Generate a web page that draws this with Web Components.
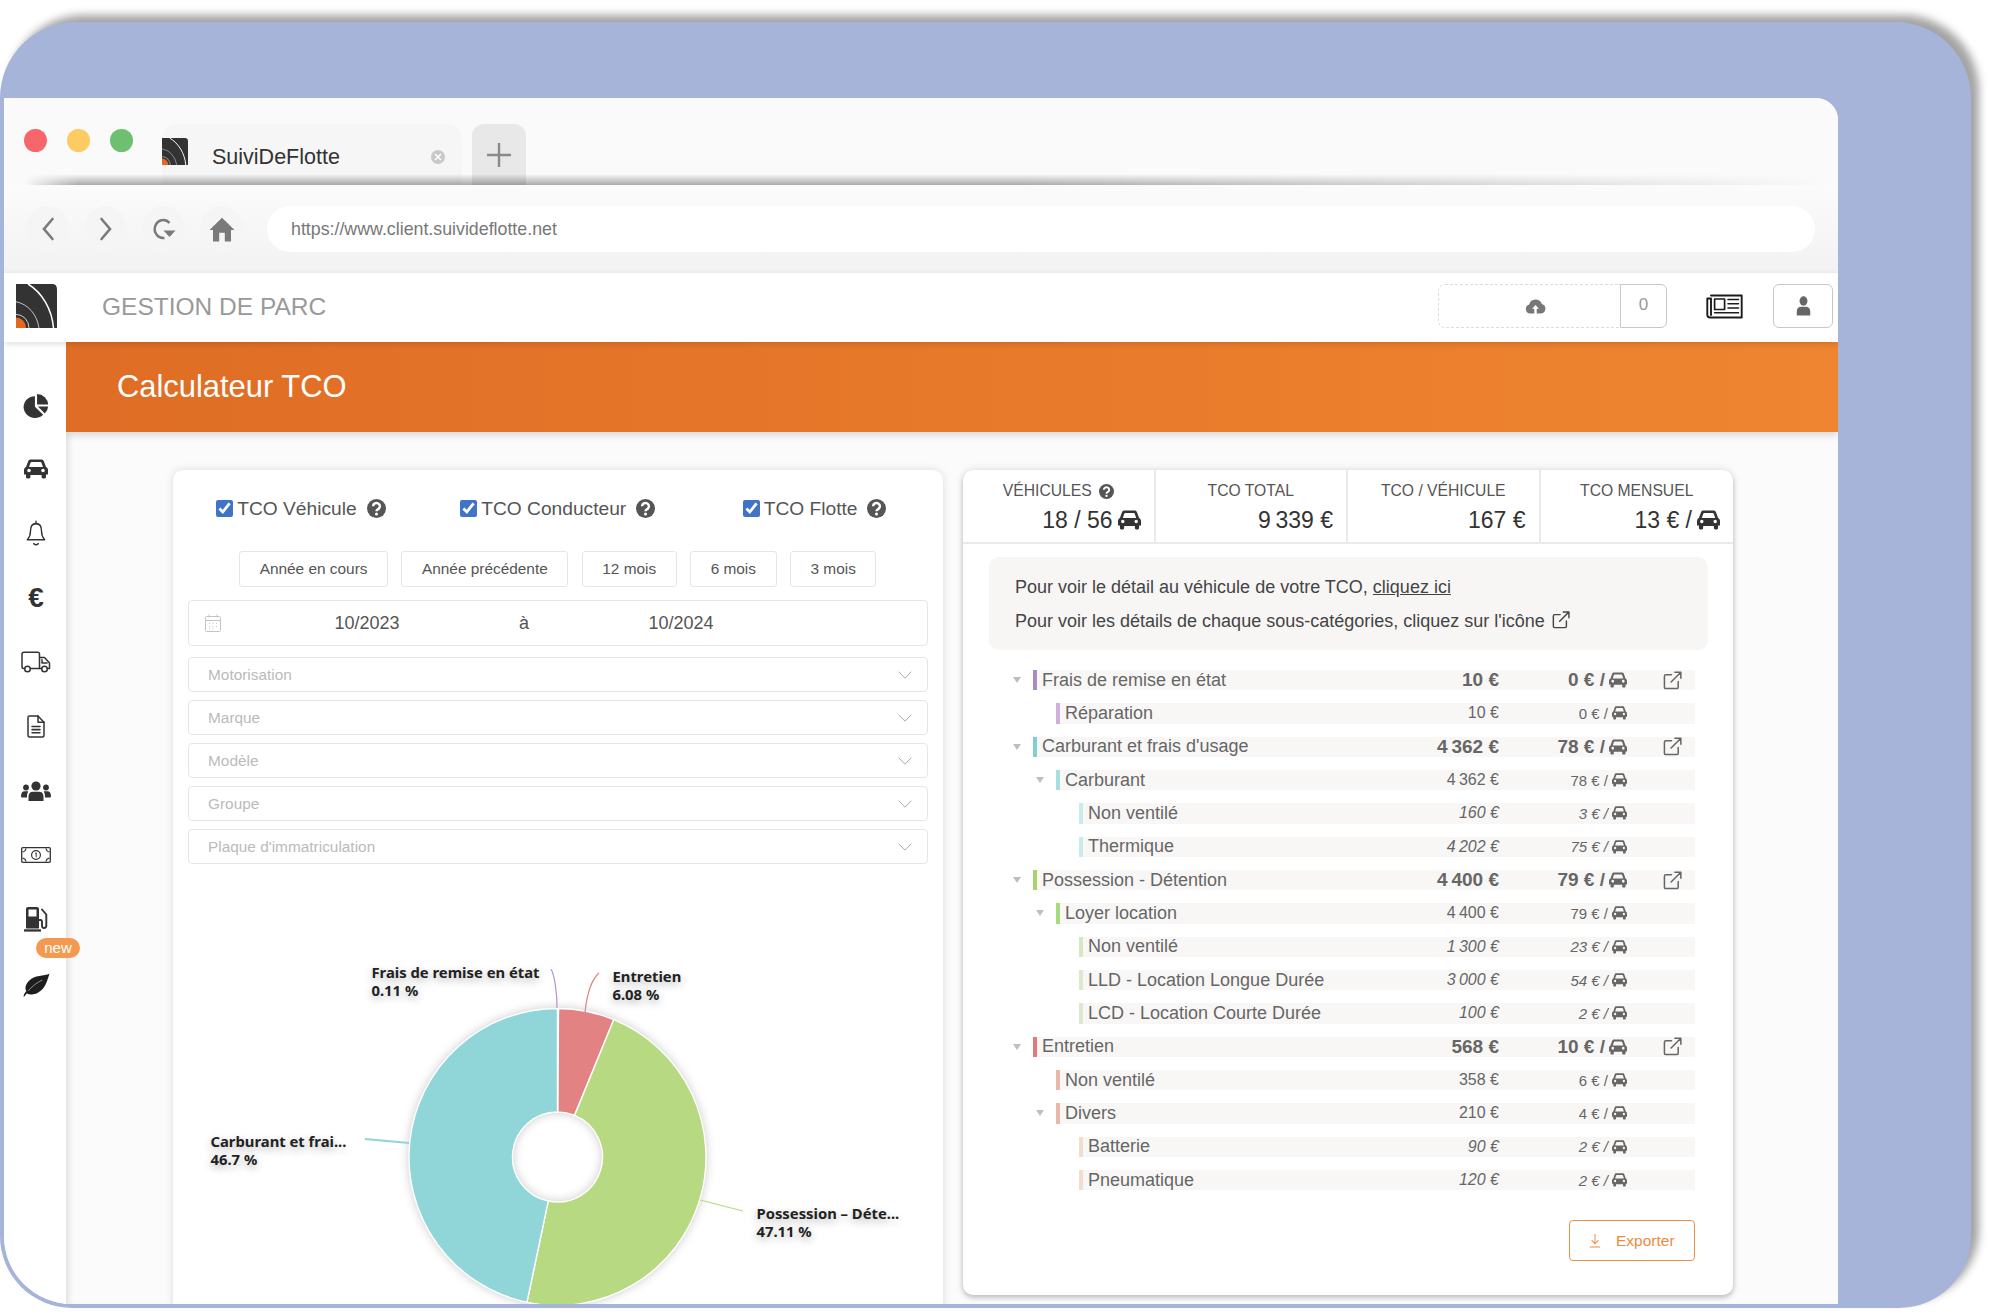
<!DOCTYPE html>
<html lang="fr">
<head>
<meta charset="utf-8">
<title>Calculateur TCO</title>
<style>
  html, body { margin: 0; height: 1314px; overflow: hidden; background: #fff; }
  body { font-family: "Liberation Sans", Arial, sans-serif; color: #555; }
</style>
</head>
<body>
<browser-frame>
  <browser-chrome url="https://www.client.suivideflotte.net" tab="SuiviDeFlotte"></browser-chrome>
  <app-header title="GESTION DE PARC"></app-header>
  <app-body>
    <side-nav slot="nav"></side-nav>
    <page-banner title="Calculateur TCO"></page-banner>
    <card-grid>
      <tco-filters></tco-filters>
      <tco-summary>
        <tco-row level="1" color="#a98bbf" label="Frais de remise en état" total="10 €" per="0 €" caret ext></tco-row>
        <tco-row level="2" color="#cfb0dc" label="Réparation" total="10 €" per="0 €"></tco-row>
        <tco-row level="1" color="#7fd0d4" label="Carburant et frais d'usage" total="4 362 €" per="78 €" caret ext></tco-row>
        <tco-row level="2" color="#a5dfe0" label="Carburant" total="4 362 €" per="78 €" caret></tco-row>
        <tco-row level="3" color="#c8ecec" label="Non ventilé" total="160 €" per="3 €"></tco-row>
        <tco-row level="3" color="#c8ecec" label="Thermique" total="4 202 €" per="75 €"></tco-row>
        <tco-row level="1" color="#a5d46f" label="Possession - Détention" total="4 400 €" per="79 €" caret ext></tco-row>
        <tco-row level="2" color="#a9d97f" label="Loyer location" total="4 400 €" per="79 €" caret></tco-row>
        <tco-row level="3" color="#d3e9bf" label="Non ventilé" total="1 300 €" per="23 €"></tco-row>
        <tco-row level="3" color="#dde9cd" label="LLD - Location Longue Durée" total="3 000 €" per="54 €"></tco-row>
        <tco-row level="3" color="#dde9cd" label="LCD - Location Courte Durée" total="100 €" per="2 €"></tco-row>
        <tco-row level="1" color="#e07a78" label="Entretien" total="568 €" per="10 €" caret ext></tco-row>
        <tco-row level="2" color="#e8b9a8" label="Non ventilé" total="358 €" per="6 €"></tco-row>
        <tco-row level="2" color="#e8b9a8" label="Divers" total="210 €" per="4 €" caret></tco-row>
        <tco-row level="3" color="#f3dccf" label="Batterie" total="90 €" per="2 €"></tco-row>
        <tco-row level="3" color="#f3dccf" label="Pneumatique" total="120 €" per="2 €"></tco-row>
      </tco-summary>
    </card-grid>
  </app-body>
</browser-frame>

<script>
// svg bodies for every icon: [viewBox, markup]
const stroke = (w) => `fill="none" stroke="currentColor" stroke-width="${w}" stroke-linecap="round" stroke-linejoin="round"`;
const ICONS = {
  car: ['0 0 24 20', `<path fill="currentColor" fill-rule="evenodd" d="M2 8 4.2 2.2C4.6 1 5.6.5 6.8.5H17.2C18.4.5 19.4 1 19.8 2.2L22 8C23.2 8.6 24 9.6 24 11V15.5H22V18C22 18.8 21.4 19.4 20.6 19.4H19C18.2 19.4 17.6 18.8 17.6 18V16H6.4V18C6.4 18.8 5.8 19.4 5 19.4H3.4C2.6 19.4 2 18.8 2 18V15.5H0V11C0 9.6.8 8.6 2 8ZM5 8H19L17.6 4C17.4 3.4 17 3 16.4 3H7.6C7 3 6.6 3.4 6.4 4ZM5 9.7A1.8 1.8 0 1 0 5 13.3 1.8 1.8 0 1 0 5 9.7ZM19 9.7A1.8 1.8 0 1 0 19 13.3 1.8 1.8 0 1 0 19 9.7Z"/>`],
  pie: ['0 0 24 24', `<g fill="currentColor"><path d="M11 3A10.5 10.5 0 1 0 18.6 20.8L11 13.2Z"/><path d="M13 1A10.5 10.5 0 0 1 23.2 11H13Z"/><path d="M13.8 13H23.2A10.5 10.5 0 0 1 20.2 19.6Z"/></g>`],
  bell: ['0 0 24 26', `<g ${stroke(1.5)}><path d="M12 3.5C7.5 3.5 6 7 6 10.5 6 15 4.5 17 2.5 19H21.5C19.5 17 18 15 18 10.5 18 7 16.5 3.5 12 3.5Z"/><path d="M12 1.2V3.5M9.5 22.8Q12 24.8 14.5 22.8"/></g>`],
  truck: ['0 0 30 22', `<g ${stroke(1.5)}><path d="M3.5 17.5H2.5Q1 17.5 1 16V3Q1 1.2 3 1.2H17Q18.5 1.2 18.5 3V17.5H9.5"/><path d="M18.5 6.5H23.5L28.5 12V17.5H26.5M18.5 17.5H20.5M21 8.8V12H26"/><circle cx="6.5" cy="18" r="2.8"/><circle cx="23.5" cy="18" r="2.8"/></g>`],
  doc: ['0 0 18 22', `<g ${stroke(1.5)}><path d="M2.4 1H11L17 7V19.6Q17 21 15.6 21H2.4Q1 21 1 19.6V2.4Q1 1 2.4 1Z"/><path d="M11 1V7H17M5 11H13M5 14H13M5 17H13"/></g>`],
  users: ['0 0 30 20', `<g fill="currentColor"><circle cx="15" cy="5" r="4.6"/><path d="M7.5 20V16Q7.5 10.8 12 10.8H18Q22.5 10.8 22.5 16V20Z"/><circle cx="5" cy="6.5" r="2.9"/><path d="M0 15.5Q0 10.3 3.6 10.3H7.3Q5.8 12.5 6 16.6H1.2Q0 16.6 0 15.5Z"/><circle cx="25" cy="6.5" r="2.9"/><path d="M30 15.5Q30 10.3 26.4 10.3H22.7Q24.2 12.5 24 16.6H28.8Q30 16.6 30 15.5Z"/></g>`],
  money: ['0 0 30 16', `<g fill="none" stroke="currentColor"><rect x=".7" y=".7" width="28.6" height="14.6" rx="1" stroke-width="1.3"/><circle cx="15" cy="8" r="4.4" stroke-width="1.2"/><path d="M14.2 6.4 15.2 5.8V10.2" stroke-width="1"/><path d="M1.5 5Q4.5 4.5 5 1.5M28.5 5Q25.5 4.5 25 1.5M1.5 11Q4.5 11.5 5 14.5M28.5 11Q25.5 11.5 25 14.5" stroke-width="1.2"/></g>`],
  fuel: ['0 0 24 26', `<path fill="currentColor" fill-rule="evenodd" d="M2 22.5V3Q2 1 4 1H13Q15 1 15 3V22.5ZM4.5 3.5V10.5H12.5V3.5Z"/><path fill="currentColor" d="M0 23.3H17V25.6H0Z"/><path ${stroke(1.9)} d="M15 14H16.5Q18 14 18 15.8V19.5Q18 22 20 22 22.3 22 22.3 19.5V8.5L18 3.5"/>`],
  leaf: ['0 0 28 24', `<path fill="currentColor" d="M27.5.8C22 3 12 2 6 8 2 12 2 16 3.5 18 1.5 20 1 21.8.4 23.6 1.6 23.6 2.5 22 3.7 20.4 6 21 10 22.5 15 20 24 15.5 25 7 27.5.8Z"/><path fill="none" stroke="#fff" stroke-width=".5" d="M5.5 17.8C9 13.5 14 10 20 7"/>`],
  news: ['0 0 37 25', `<g ${stroke(1.9)}><path d="M5 1.5H35.7V23.5H4Q1.3 23.5 1.3 20.8V4.5H5V21"/><rect x="8.6" y="5" width="10" height="10.5" stroke-width="1.7"/><path d="M22 5.5H32.5M22 9.7H32.5M22 14H32.5M8.6 18.8H32.5" stroke-width="1.6"/></g>`],
  cloud: ['0 0 24 18', `<path fill="currentColor" d="M6 17.5A5.2 5.2 0 0 1 4.8 7.3 7.5 7.5 0 0 1 19.2 6.7 5.5 5.5 0 0 1 18.3 17.5H13.4V12.2H16L12 7.8 8 12.2H10.6V17.5Z"/>`],
  user: ['0 0 24 26', `<g fill="currentColor"><ellipse cx="12" cy="6.5" rx="5.6" ry="6.2"/><path d="M2.5 25.5V20.5Q2.5 14 9 14H15Q21.5 14 21.5 20.5V25.5Z"/></g>`],
  help: ['0 0 20 20', `<circle cx="10" cy="10" r="10" fill="currentColor"/><path fill="none" stroke="#fff" stroke-width="2.6" d="M6.4 7.6A3.6 3.4 0 1 1 11.8 10.6C10.5 11.3 10 11.9 10 13"/><circle cx="10" cy="15.8" r="1.6" fill="#fff"/>`],
  ext: ['0 0 20 20', `<g ${stroke(1.6)}><path d="M9 4H3Q1.5 4 1.5 5.5V17Q1.5 18.5 3 18.5H14.5Q16 18.5 16 17V11"/><path d="M8.5 11.5 18.5 1.5M12.5 1.2H18.8V7.5"/></g>`],
  calendar: ['0 0 16 18', `<g fill="none" stroke="currentColor" stroke-width="1"><rect x=".5" y="2.5" width="15" height="15" rx="1"/><path d="M.5 6.5H15.5M4 .5V3.5M12 .5V3.5M4 9.5H5M7.5 9.5H8.5M11 9.5H12M4 12.5H5M7.5 12.5H8.5M11 12.5H12M4 15H5M7.5 15H8.5"/></g>`],
  chevron: ['0 0 14 8', `<path fill="none" stroke="currentColor" stroke-width="1" d="M.7.7 7 7.2 13.3.7"/>`],
  download: ['0 0 14 16', `<path fill="none" stroke="currentColor" stroke-width="1.1" d="M7 1V11M3 7.5 7 11.5 11 7.5M1 15H13"/>`],
  back: ['0 0 14 24', `<path fill="none" stroke="currentColor" stroke-width="2.6" stroke-linecap="round" d="M11.5 2 3 12 11.5 22"/>`],
  forward: ['0 0 14 24', `<path fill="none" stroke="currentColor" stroke-width="2.6" stroke-linecap="round" d="M2.5 2 11 12 2.5 22"/>`],
  reload: ['0 0 24 24', `<path fill="none" stroke="currentColor" stroke-width="2.5" d="M17.5 6A8.5 9 0 1 0 12.5 21"/><path fill="currentColor" d="M11.5 13.5H23.5L17.5 20Z"/>`],
  home: ['0 0 26 26', `<path fill="currentColor" d="M13 .8 25.5 13.5H22V25.5H15.8V16.5H10.2V25.5H4V13.5H.5Z"/>`],
  plus: ['0 0 24 24', `<path fill="none" stroke="currentColor" stroke-width="2.4" d="M12 0V24M0 12H24"/>`],
  logo: ['0 0 41 42', `<path fill="#333" d="M0 0H36Q41 0 41 5V42H0Z"/><path fill="none" stroke="#fff" stroke-width="1.5" d="M12 0C26 8 36 24 37.5 42"/><path fill="none" stroke="#ccc" stroke-width=".9" d="M0 17C12 19 21 29 23 42"/><path fill="none" stroke="#eee" stroke-width=".8" d="M0 29A13 13 0 0 1 13 42"/><path fill="#e2691f" d="M0 32A10 10 0 0 1 10 42H0Z"/>`],
};

class UiIcon extends HTMLElement {
  connectedCallback() {
    const [box, body] = ICONS[this.getAttribute('name')];
    const w = this.getAttribute('w') || 16;
    const h = this.getAttribute('h') || w;
    this.attachShadow({ mode: 'open' }).innerHTML = `
      <style>:host { display: inline-flex; flex: none; line-height: 0; } svg { display: block; }</style>
      <svg width="${w}" height="${h}" viewBox="${box}" preserveAspectRatio="none">${body}</svg>`;
  }
}
customElements.define('ui-icon', UiIcon);

class BrowserFrame extends HTMLElement {
  connectedCallback() {
    this.attachShadow({ mode: 'open' }).innerHTML = `
      <style>
        :host {
          display: block; box-sizing: border-box; width: 1971px; height: 1286px; margin-top: 22px;
          padding: 76px 133px 4px 4px; background: #a5b4d8; border-radius: 76px 76px 72px 72px;
          box-shadow: 8px -7px 9px rgba(0,0,0,.36);
        }
        .window {
          display: flex; flex-direction: column; height: 100%; overflow: hidden; background: #fff;
          border-radius: 0 22px 0 68px;
        }
      </style>
      <div class="window"><slot></slot></div>`;
  }
}
customElements.define('browser-frame', BrowserFrame);

class BrowserChrome extends HTMLElement {
  connectedCallback() {
    this.attachShadow({ mode: 'open' }).innerHTML = `
      <style>
        :host { display: block; flex: none; }
        .tabs { position: relative; display: flex; height: 87px; box-sizing: border-box; padding: 26px 0 0 20px; background: #fafafa; }
        .tabs::after {
          content: ""; position: absolute; left: 20px; right: 10px; bottom: 0; height: 11px;
          background: linear-gradient(transparent, rgba(0,0,0,.32));
          -webkit-mask-image: linear-gradient(90deg, transparent, #000 3%, #000 55%, transparent);
        }
        .dots { display: flex; gap: 20.5px; padding-top: 5px; width: 138px; }
        .dots i { width: 22.5px; height: 23px; border-radius: 50%; }
        .tab {
          display: flex; align-items: flex-start; box-sizing: border-box; width: 300px; padding-top: 14px;
          background: #f7f6f6; border-radius: 14px 14px 0 0;
        }
        .tab span { margin-left: 24px; width: 219px; font-size: 21.5px; line-height: 38px; color: #333; }
        .close {
          width: 14px; height: 14px; margin-top: 12px; border-radius: 50%; background: #c9c9c9; color: #fff;
          display: grid; place-items: center;
        }
        .new {
          width: 54px; margin-left: 10px; background: #e8e8e8; border-radius: 12px 12px 0 0; color: #8a8a8a;
          display: flex; justify-content: center; padding-top: 19px; box-sizing: border-box;
        }
        .bar {
          display: flex; align-items: center; height: 88px; box-sizing: border-box; padding: 0 23px 0 22px;
          background: linear-gradient(#fbfbfb, #f3f2f2);
        }
        .nav { display: flex; gap: 15px; margin-right: 24px; }
        .nav b {
          width: 43px; height: 46px; border-radius: 50%; background: #f6f5f5; color: #7a7a7a;
          display: grid; place-items: center;
        }
        .url {
          flex: 1; height: 46px; padding-left: 24px; border-radius: 23px; background: #fff;
          font-size: 17.8px; line-height: 46px; color: #777;
        }
      </style>
      <div class="tabs">
        <div class="dots"><i style="background:#f6666a"></i><i style="background:#fecb62"></i><i style="background:#6cc070"></i></div>
        <div class="tab">
          <ui-icon name="logo" w="26" h="27"></ui-icon>
          <span>${this.getAttribute('tab')}</span>
          <div class="close"><svg width="8" height="8" viewBox="0 0 8 8"><path d="M1 1 7 7M7 1 1 7" stroke="#fff" stroke-width="1.6"/></svg></div>
        </div>
        <div class="new"><ui-icon name="plus" w="24" h="24"></ui-icon></div>
      </div>
      <div class="bar">
        <div class="nav">
          <b><ui-icon name="back" w="14" h="24"></ui-icon></b>
          <b><ui-icon name="forward" w="14" h="24"></ui-icon></b>
          <b><ui-icon name="reload" w="24" h="24"></ui-icon></b>
          <b><ui-icon name="home" w="26" h="25"></ui-icon></b>
        </div>
        <div class="url">${this.getAttribute('url')}</div>
      </div>`;
  }
}
customElements.define('browser-chrome', BrowserChrome);

class AppHeader extends HTMLElement {
  connectedCallback() {
    this.attachShadow({ mode: 'open' }).innerHTML = `
      <style>
        :host {
          position: relative; z-index: 3; display: flex; flex: none; align-items: center; box-sizing: border-box;
          height: 69px; padding: 0 5px 3px 12px; background: #fff; box-shadow: 0 2px 6px rgba(0,0,0,.14);
        }
        h1 { flex: 1; margin: 2px 0 0 45px; font-size: 24.5px; font-weight: 400; color: #999; }
        .upload {
          display: flex; width: 229px; height: 44px; box-sizing: border-box;
        }
        .drop {
          flex: 1; display: flex; align-items: center; justify-content: center; padding-left: 12px;
          border: 1.5px dashed #ddd; border-right: 0; border-radius: 7px 0 0 7px; color: #777;
        }
        .count {
          width: 47px; box-sizing: border-box; border: 1.5px solid #c8c8c8; border-radius: 0 6px 6px 0;
          text-align: center; font-size: 17px; line-height: 40px; color: #999;
        }
        .news { margin: 0 30px 0 39px; color: #1c1c1c; }
        .me {
          width: 60px; height: 44px; box-sizing: border-box; border: 1.5px solid #c8c8c8; border-radius: 6px;
          display: grid; place-items: center; color: #666;
        }
      </style>
      <ui-icon name="logo" w="41" h="44"></ui-icon>
      <h1>${this.getAttribute('title')}</h1>
      <div class="upload">
        <div class="drop"><ui-icon name="cloud" w="21" h="16"></ui-icon></div>
        <div class="count">0</div>
      </div>
      <ui-icon class="news" name="news" w="37" h="25"></ui-icon>
      <div class="me"><ui-icon name="user" w="17" h="20"></ui-icon></div>`;
  }
}
customElements.define('app-header', AppHeader);

class AppBody extends HTMLElement {
  connectedCallback() {
    this.attachShadow({ mode: 'open' }).innerHTML = `
      <style>
        :host { display: flex; flex: 1; min-height: 0; }
        nav { position: relative; z-index: 2; flex: none; width: 62px; background: #fff; }
        main { flex: 1; min-width: 0; display: flex; flex-direction: column; background: #fbfbfb;
               box-shadow: inset 7px 0 7px -5px rgba(0,0,0,.13); }
      </style>
      <nav><slot name="nav"></slot></nav>
      <main><slot></slot></main>`;
  }
}
customElements.define('app-body', AppBody);

class SideNav extends HTMLElement {
  connectedCallback() {
    const items = [
      ['pie', 26, 25], ['car', 24, 20], ['bell', 22, 27], ['euro'], ['truck', 30, 22], ['doc', 18, 23],
      ['users', 30, 20], ['money', 30, 16], ['fuel', 24, 26],
    ];
    const cells = items.map(([name, w, h]) => `<div class="item">${
      name === 'euro' ? '<span class="euro">€</span>' : `<ui-icon name="${name}" w="${w}" h="${h}"></ui-icon>`
    }</div>`).join('');
    this.attachShadow({ mode: 'open' }).innerHTML = `
      <style>
        :host { display: block; padding: 31px 0 0 2px; color: #333; }
        .item { height: 64.25px; display: grid; place-items: center; }
        .euro { font-size: 28px; font-weight: 700; line-height: 1; }
        .leaf { height: 64px; margin-top: 2px; display: grid; place-items: center; color: #1e1e1e; }
        .badge {
          position: absolute; left: 32px; top: 596px; width: 44px; height: 20px; border-radius: 10px;
          background: #f39a50; color: #fff; font-size: 15px; line-height: 19px; text-align: center;
        }
      </style>
      ${cells}
      <div class="badge">new</div>
      <div class="leaf"><ui-icon name="leaf" w="27" h="24"></ui-icon></div>`;
  }
}
customElements.define('side-nav', SideNav);

class PageBanner extends HTMLElement {
  connectedCallback() {
    this.attachShadow({ mode: 'open' }).innerHTML = `
      <style>
        :host {
          position: relative; display: flex; flex: none; align-items: center; box-sizing: border-box; height: 90px; padding: 0 0 0 51px;
          background: linear-gradient(90deg, #df6d25, #ef8530); box-shadow: 0 3px 8px rgba(0,0,0,.15);
          color: #fff; font-size: 30.9px;
        }
      </style>
      ${this.getAttribute('title')}`;
  }
}
customElements.define('page-banner', PageBanner);

class CardGrid extends HTMLElement {
  connectedCallback() {
    this.attachShadow({ mode: 'open' }).innerHTML = `
      <style>
        :host { display: grid; grid-template-columns: 770.5px 770px; gap: 20px; align-items: start; padding: 38px 0 0 106.5px; }
      </style>
      <slot></slot>`;
  }
}
customElements.define('card-grid', CardGrid);

class TcoFilters extends HTMLElement {
  connectedCallback() {
    const check = (label) => `
      <label><input type="checkbox" checked><span>${label}</span><ui-icon name="help" w="19" h="19"></ui-icon></label>`;
    const select = (label) => `<div class="select"><span>${label}</span><ui-icon name="chevron" w="14" h="8"></ui-icon></div>`;
    this.attachShadow({ mode: 'open' }).innerHTML = `
      <style>
        :host {
          display: block; box-sizing: border-box; height: 900px; background: #fff; border-radius: 10px;
          box-shadow: 0 0 8px rgba(0,0,0,.13); padding: 0 15.5px;
        }
        .checks { display: grid; grid-template-columns: repeat(3, 1fr); height: 81px; align-items: center; margin: 0 -15.5px; padding-bottom: 4px; box-sizing: border-box; }
        label { display: flex; align-items: center; justify-content: center; font-size: 19.2px; color: #555; }
        input { width: 17px; height: 17px; margin: 0 4px 0 0; accent-color: #3f74c9; }
        label ui-icon { margin-left: 10px; color: #555; }
        .ranges { display: flex; justify-content: center; gap: 13.5px; }
        .ranges button {
          height: 36px; padding: 0 19.5px; background: #fff; border: 1.5px solid #e6e6ea; border-radius: 3px;
          font: 15.4px "Liberation Sans", Arial, sans-serif; color: #555;
        }
        .date {
          display: flex; align-items: center; height: 46px; margin-top: 13px; box-sizing: border-box; padding-left: 16px;
          border: 1.5px solid #e6e6ea; border-radius: 4px; font-size: 18px; color: #555;
        }
        .date ui-icon { color: #c4c4c4; }
        .date span { width: 292px; text-align: center; }
        .date em { width: 22px; font-style: normal; text-align: center; }
        .select {
          display: flex; align-items: center; justify-content: space-between; height: 35px; margin-top: 8px; box-sizing: border-box;
          padding: 0 15px 0 19px; border: 1.5px solid #e6e6ea; border-radius: 4px; font-size: 15.4px; color: #bbb;
        }
        .select ui-icon { color: #aaa; }
        .first { margin-top: 11px; }
      </style>
      <div class="checks">${check('TCO Véhicule')}${check('TCO Conducteur')}${check('TCO Flotte')}</div>
      <div class="ranges">
        <button>Année en cours</button><button>Année précédente</button><button>12 mois</button><button>6 mois</button><button>3 mois</button>
      </div>
      <div class="date"><ui-icon name="calendar" w="16" h="18"></ui-icon><span>10/2023</span><em>à</em><span>10/2024</span></div>
      <div class="select first"><span>Motorisation</span><ui-icon name="chevron" w="14" h="8"></ui-icon></div>
      ${select('Marque')}${select('Modèle')}${select('Groupe')}${select("Plaque d'immatriculation")}
      <tco-donut></tco-donut>`;
  }
}
customElements.define('tco-filters', TcoFilters);

class TcoDonut extends HTMLElement {
  connectedCallback() {
    // share of the total, clockwise from the top
    const slices = [[0.11, '#b892cc'], [6.08, '#e28282'], [47.11, '#b6d982'], [46.7, '#90d5d8']];
    const cx = 369.5, cy = 293, R = 148.5, r = 45;
    const pt = (rad, a) => `${(cx + rad * Math.sin(a)).toFixed(2)} ${(cy - rad * Math.cos(a)).toFixed(2)}`;
    let acc = 0;
    const paths = slices.map(([pct, color]) => {
      const a0 = acc / 100 * 2 * Math.PI;
      acc += pct;
      const a1 = acc / 100 * 2 * Math.PI;
      const big = pct > 50 ? 1 : 0;
      return `<path fill="${color}" stroke="#fff" stroke-width="1.4" d="M${pt(R, a0)}A${R} ${R} 0 ${big} 1 ${pt(R, a1)}L${pt(r, a1)}A${r} ${r} 0 ${big} 0 ${pt(r, a0)}Z"/>`;
    }).join('');
    this.attachShadow({ mode: 'open' }).innerHTML = `
      <style>
        :host { position: relative; display: block; height: 440px; margin: 0 -15.5px; }
        svg { position: absolute; left: 15.5px; top: 0; }
        .pie { filter: drop-shadow(0 0 5px rgba(0,0,0,.2)); }
        .label {
          position: absolute; white-space: nowrap; font: 700 14.8px/18px "Noto Sans", "DejaVu Sans", sans-serif; color: #222;
          text-shadow: 0 3px 9px rgba(0,0,0,.3);
        }
      </style>
      <svg width="740" height="440">
        <g class="pie">${paths}</g>
        <g fill="none" stroke-width="1.2">
          <path stroke="#b892cc" d="M363 105C367 112 369 130 369 144"/>
          <path stroke="#e28282" d="M411 109C403 116 399 130 397 148"/>
          <path stroke="#90d5d8" stroke-width="1.8" d="M177 275 221 279"/>
          <path stroke="#b6d982" d="M512 336 555 347"/>
        </g>
      </svg>
      <div class="label" style="left:199px;top:99px">Frais de remise en état<br>0.11 %</div>
      <div class="label" style="left:440px;top:103px">Entretien<br>6.08 %</div>
      <div class="label" style="left:38px;top:268px">Carburant et frai...<br>46.7 %</div>
      <div class="label" style="left:584px;top:340px">Possession – Déte...<br>47.11 %</div>`;
  }
}
customElements.define('tco-donut', TcoDonut);

class TcoSummary extends HTMLElement {
  connectedCallback() {
    const car = (w, h) => `<ui-icon name="car" w="${w}" h="${h}"></ui-icon>`;
    this.attachShadow({ mode: 'open' }).innerHTML = `
      <style>
        :host {
          display: block; box-sizing: border-box; height: 825px; background: #fff; border-radius: 10px;
          box-shadow: 0 0 8px rgba(0,0,0,.13), 0 3px 5px rgba(0,0,0,.18);
        }
        .stats { display: grid; grid-template-columns: repeat(4, 1fr); height: 74px; border-bottom: 2px solid #e9e9ee; box-sizing: border-box; }
        .stat { box-sizing: border-box; padding: 12px 13px 0; border-right: 2px solid #e9e9ee; }
        .stat:last-child { border-right: 0; }
        .head { display: flex; justify-content: center; align-items: center; gap: 7px; height: 18px; font-size: 15.7px; color: #555; }
        .val { display: flex; justify-content: flex-end; align-items: center; gap: 5px; height: 30px; margin-top: 5px; font-size: 23px; color: #333; }
        .notice {
          margin: 13px 25px 0 26px; height: 93px; box-sizing: border-box; padding: 13px 26px; background: #f7f6f5; border-radius: 10px;
          font-size: 18px; line-height: 34px; color: #444;
        }
        .notice a { color: inherit; text-decoration: underline; }
        .notice ui-icon { vertical-align: -2px; margin-left: 2px; }
        .tree { display: grid; gap: 13px; margin: 20px 38px 0 48px; }
        .actions { display: flex; justify-content: flex-end; margin: 30px 38px 0 0; }
        .export {
          display: flex; align-items: center; gap: 15px; width: 126px; height: 41px; box-sizing: border-box; padding-left: 19px;
          background: #fff; border: 1.5px solid #f09245; border-radius: 4px; color: #f08a3c; font: 15.5px "Liberation Sans", Arial, sans-serif;
        }
      </style>
      <div class="stats">
        <div class="stat"><div class="head">VÉHICULES <ui-icon name="help" w="15" h="15"></ui-icon></div><div class="val">18 / 56 ${car(23, 20)}</div></div>
        <div class="stat"><div class="head">TCO TOTAL</div><div class="val">9\u202f339 €</div></div>
        <div class="stat"><div class="head">TCO / VÉHICULE</div><div class="val">167 €</div></div>
        <div class="stat"><div class="head">TCO MENSUEL</div><div class="val">13 € / ${car(23, 20)}</div></div>
      </div>
      <div class="notice">
        Pour voir le détail au véhicule de votre TCO, <a>cliquez ici</a><br>
        Pour voir les détails de chaque sous-catégories, cliquez sur l'icône <ui-icon name="ext" w="18" h="18"></ui-icon>
      </div>
      <div class="tree"><slot></slot></div>
      <div class="actions"><button class="export"><ui-icon name="download" w="12" h="15"></ui-icon>Exporter</button></div>`;
  }
}
customElements.define('tco-summary', TcoSummary);

class TcoRow extends HTMLElement {
  connectedCallback() {
    const level = +this.getAttribute('level');
    const nb = (s) => s.replace(/(\d) (\d)/, '$1\u202f$2');
    const size = level === 1 ? 19 : 16;
    const perSize = level === 1 ? 19 : 15;
    this.attachShadow({ mode: 'open' }).innerHTML = `
      <style>
        :host { display: flex; align-items: center; height: 20.33px; padding-left: ${(level - 1) * 23}px; }
        .caret { flex: none; width: 22px; height: 100%; display: flex; align-items: center; padding-left: 2px; box-sizing: border-box; }
        .caret i { display: block; width: 0; height: 0; border: 4.5px solid transparent; border-top: 6px solid #bdbdc4; border-bottom: 0; }
        .strip { flex: 1; display: flex; align-items: center; height: 100%; background: #f8f7f6; box-shadow: inset 4px 0 0 ${this.getAttribute('color')}; padding-left: 9px; color: #666; }
        .name { flex: 1; font-size: 18px; color: #666; white-space: nowrap; }
        .total { font-size: ${size}px; font-weight: ${level === 1 ? 700 : 400}; font-style: ${level === 3 ? 'italic' : 'normal'}; }
        .per { display: flex; justify-content: flex-end; align-items: center; gap: 4px; width: 128px; font-size: ${perSize}px;
               font-weight: ${level === 1 ? 700 : 400}; font-style: ${level === 3 ? 'italic' : 'normal'}; }
        .ext { width: 68px; box-sizing: border-box; padding-left: 36px; display: flex; color: #666; }
      </style>
      <div class="caret">${this.hasAttribute('caret') ? '<i></i>' : ''}</div>
      <div class="strip">
        <span class="name">${this.getAttribute('label')}</span>
        <span class="total">${nb(this.getAttribute('total'))}</span>
        <span class="per">${this.getAttribute('per')} / <ui-icon name="car" w="${level === 1 ? 18 : 15}" h="${level === 1 ? 16 : 14}"></ui-icon></span>
        <span class="ext">${this.hasAttribute('ext') ? '<ui-icon name="ext" w="19" h="19"></ui-icon>' : ''}</span>
      </div>`;
  }
}
customElements.define('tco-row', TcoRow);
</script>
</body>
</html>
